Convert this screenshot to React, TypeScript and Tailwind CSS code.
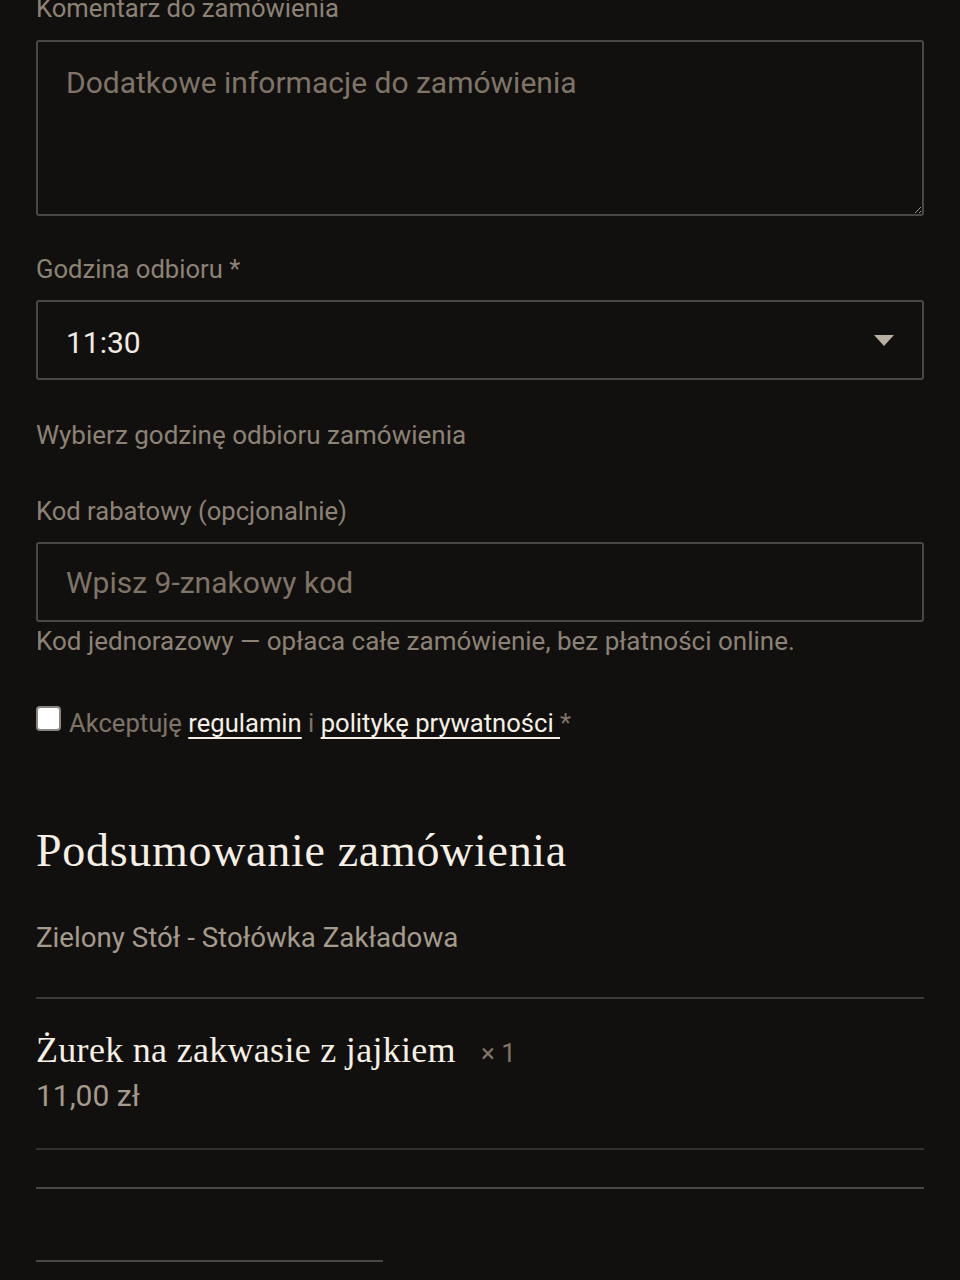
import React from "react";

export default function App() {
  const sans = "font-['Roboto','Liberation_Sans',sans-serif]";
  const serif = "font-['Liberation_Serif','Times_New_Roman',serif]";
  return (
    <div className={`h-[1280px] overflow-hidden bg-[#12100e] ${sans} px-[36px]`}>
      <div className="-mt-[10px] flex flex-col">
        <label className="text-[25.6px] leading-[36px] text-[#8c8276]">Komentarz do zamówienia</label>
        <textarea
          className="mt-[14px] h-[176px] w-full rounded-[3px] border-2 border-[#4a4744] bg-[#12100e] px-[28px] pt-[21px] text-[30px] leading-[40px] text-[#f2ece2] placeholder:text-[#7e7468] outline-none"
          placeholder="Dodatkowe informacje do zamówienia"
        />
        <label className="mt-[35px] text-[25.6px] leading-[36px] text-[#8c8276]">Godzina odbioru *</label>
        <div className="mt-[13px] flex h-[80px] items-center justify-between rounded-[3px] border-2 border-[#4a4744] pl-[28px] pr-[28px]">
          <span className="pt-[5px] text-[30px] text-[#f2ece2]">11:30</span>
          <svg width="20" height="11" viewBox="0 0 20 11"><polygon points="0,0 20,0 10,11" fill="#b7afa3" /></svg>
        </div>
        <p className="mt-[37px] text-[26px] leading-[36px] text-[#8c8276]">Wybierz godzinę odbioru zamówienia</p>
        <label className="mt-[40px] text-[25.6px] leading-[36px] text-[#8c8276]">Kod rabatowy (opcjonalnie)</label>
        <div className="mt-[13px] flex h-[80px] items-center rounded-[3px] border-2 border-[#4a4744] pl-[28px]">
          <span className="text-[30px] text-[#7e7468]">Wpisz 9-znakowy kod</span>
        </div>
        <p className="mt-[1px] text-[26px] leading-[36px] text-[#8c8276]">Kod jednorazowy — opłaca całe zamówienie, bez płatności online.</p>
        <div className="mt-[46px] flex items-start gap-[8px]">
          <span className="mt-[1px] h-[25px] w-[25px] shrink-0 rounded-[4px] border-2 border-[#8a8580] bg-white" />
          <span className="text-[25.6px] leading-[36px] text-[#7e7468]">
            Akceptuję <a className="text-[#f5efe6] underline decoration-2 underline-offset-[5px]">regulamin</a> i{" "}
            <a className="text-[#f5efe6] underline decoration-2 underline-offset-[5px]">politykę prywatności </a> *
          </span>
        </div>
        <h2 className={`mt-[82px] ${serif} text-[46px] leading-[56px] tracking-[0.7px] text-[#f5efe6]`}>Podsumowanie zamówienia</h2>
        <p className="mt-[41px] text-[27.7px] leading-[36px] text-[#a49a8d]">Zielony Stół - Stołówka Zakładowa</p>
        <div className="mt-[41px] border-t-2 border-[#3e3a37]" />
        <div className="mt-[29px] flex items-baseline gap-[25px]">
          <span className={`${serif} text-[36px] leading-[44px] tracking-[0.3px] text-[#f5efe6]`}>Żurek na zakwasie z jajkiem</span>
          <span className="text-[26px] text-[#7e7468]">× 1</span>
        </div>
        <p className="mt-[4px] text-[30px] leading-[38px] text-[#a49a8d]">11,00 zł</p>
        <div className="mt-[33px] border-t-2 border-[#33302d]" />
        <div className="mt-[37px] border-t-2 border-[#4a4744]" />
        <div className="mt-[71px] w-[347px] border-t-2 border-[#4a4744]" />
      </div>
    </div>
  );
}
